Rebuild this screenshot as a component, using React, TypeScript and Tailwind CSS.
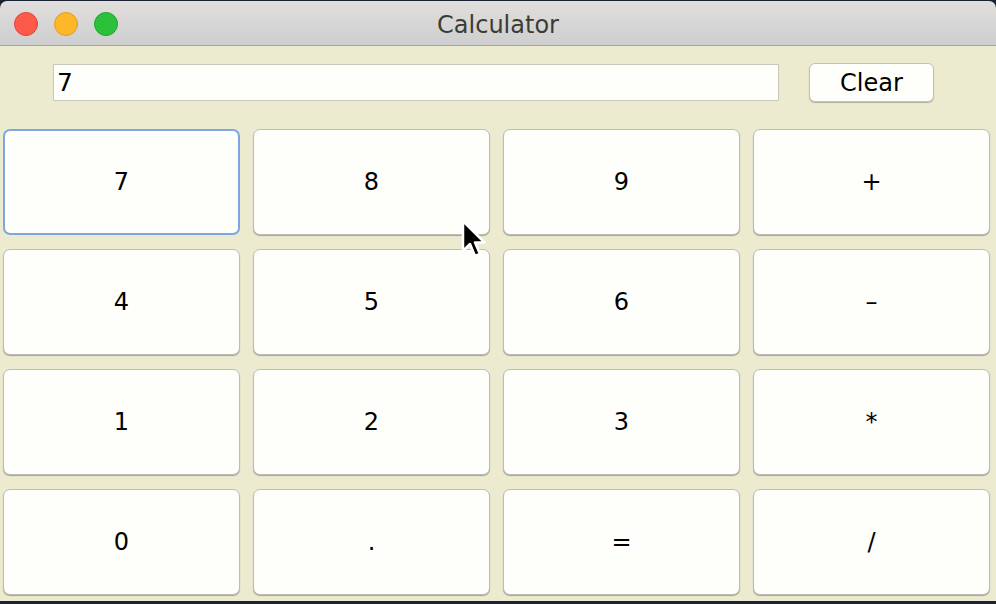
import React from "react";

const keys = ["7", "8", "9", "+", "4", "5", "6", "–", "1", "2", "3", "*", "0", ".", "=", "/"];

export default function App() {
  return (
    <div
      className="relative w-[996px] h-[604px] overflow-hidden bg-[#1b2233] flex flex-col"
      style={{ fontFamily: '"DejaVu Sans", "Liberation Sans", sans-serif' }}
    >
      {/* Title bar */}
      <div className="h-[45px] shrink-0 flex items-center relative bg-gradient-to-b from-[#e0dfdc] to-[#cfced0] border-b border-[#a5a49f] rounded-t-[7px] mt-[1px]">
        <div className="flex items-center gap-4 pl-[14px] pt-[2px]">
          <span className="w-6 h-6 rounded-full bg-[#fd5a4c] border border-[#e0443a]" />
          <span className="w-6 h-6 rounded-full bg-[#fdb728] border border-[#de9f1e]" />
          <span className="w-6 h-6 rounded-full bg-[#2cc13a] border border-[#1fa52c]" />
        </div>
        <div className="absolute inset-0 flex items-center justify-center text-[24px] text-[#3d3c33] pt-[4px]">
          Calculator
        </div>
      </div>

      {/* Window body */}
      <div className="flex-1 bg-[#ecebd0] flex flex-col mb-[3px]">
        {/* Display row */}
        <div className="flex items-center pl-[53px] pt-[16px] h-[57px]">
          <div className="w-[726px] h-[37px] bg-[#fefefb] border border-[#c9c8bd] flex items-center pl-[3px] text-[25px] text-black">
            7
          </div>
          <button className="ml-[30px] w-[125px] h-[39px] bg-[#fefefb] rounded-[6px] border border-[#c2c1bb] shadow-[0_1px_1px_rgba(0,0,0,0.25)] text-[24px] text-black leading-none">
            Clear
          </button>
        </div>

        {/* Keypad */}
        <div className="grid grid-cols-[repeat(4,237px)] grid-rows-[repeat(4,106px)] gap-x-[13px] gap-y-[14px] pl-[3px] pt-[26px]">
          {keys.map((k, i) => (
            <button
              key={k}
              className={
                i === 0
                  ? "bg-[#fefefb] rounded-[7px] border-2 border-[#7ea6e3] text-[24px] text-black"
                  : "bg-[#fefefb] rounded-[7px] border border-[#bdbcb6] shadow-[0_1px_1px_rgba(0,0,0,0.3)] text-[24px] text-black"
              }
            >
              {k}
            </button>
          ))}
        </div>
      </div>

      {/* Mouse cursor */}
      <svg className="absolute left-[459px] top-[217px]" width="30" height="46" viewBox="0 0 30 46">
        <path
          d="M4 4 L4 34 L11 27 L16 39 L21 37 L16 25.5 L25.5 25.5 Z"
          fill="#000"
          stroke="#fff"
          strokeWidth="2.5"
          strokeLinejoin="round"
        />
      </svg>
    </div>
  );
}
